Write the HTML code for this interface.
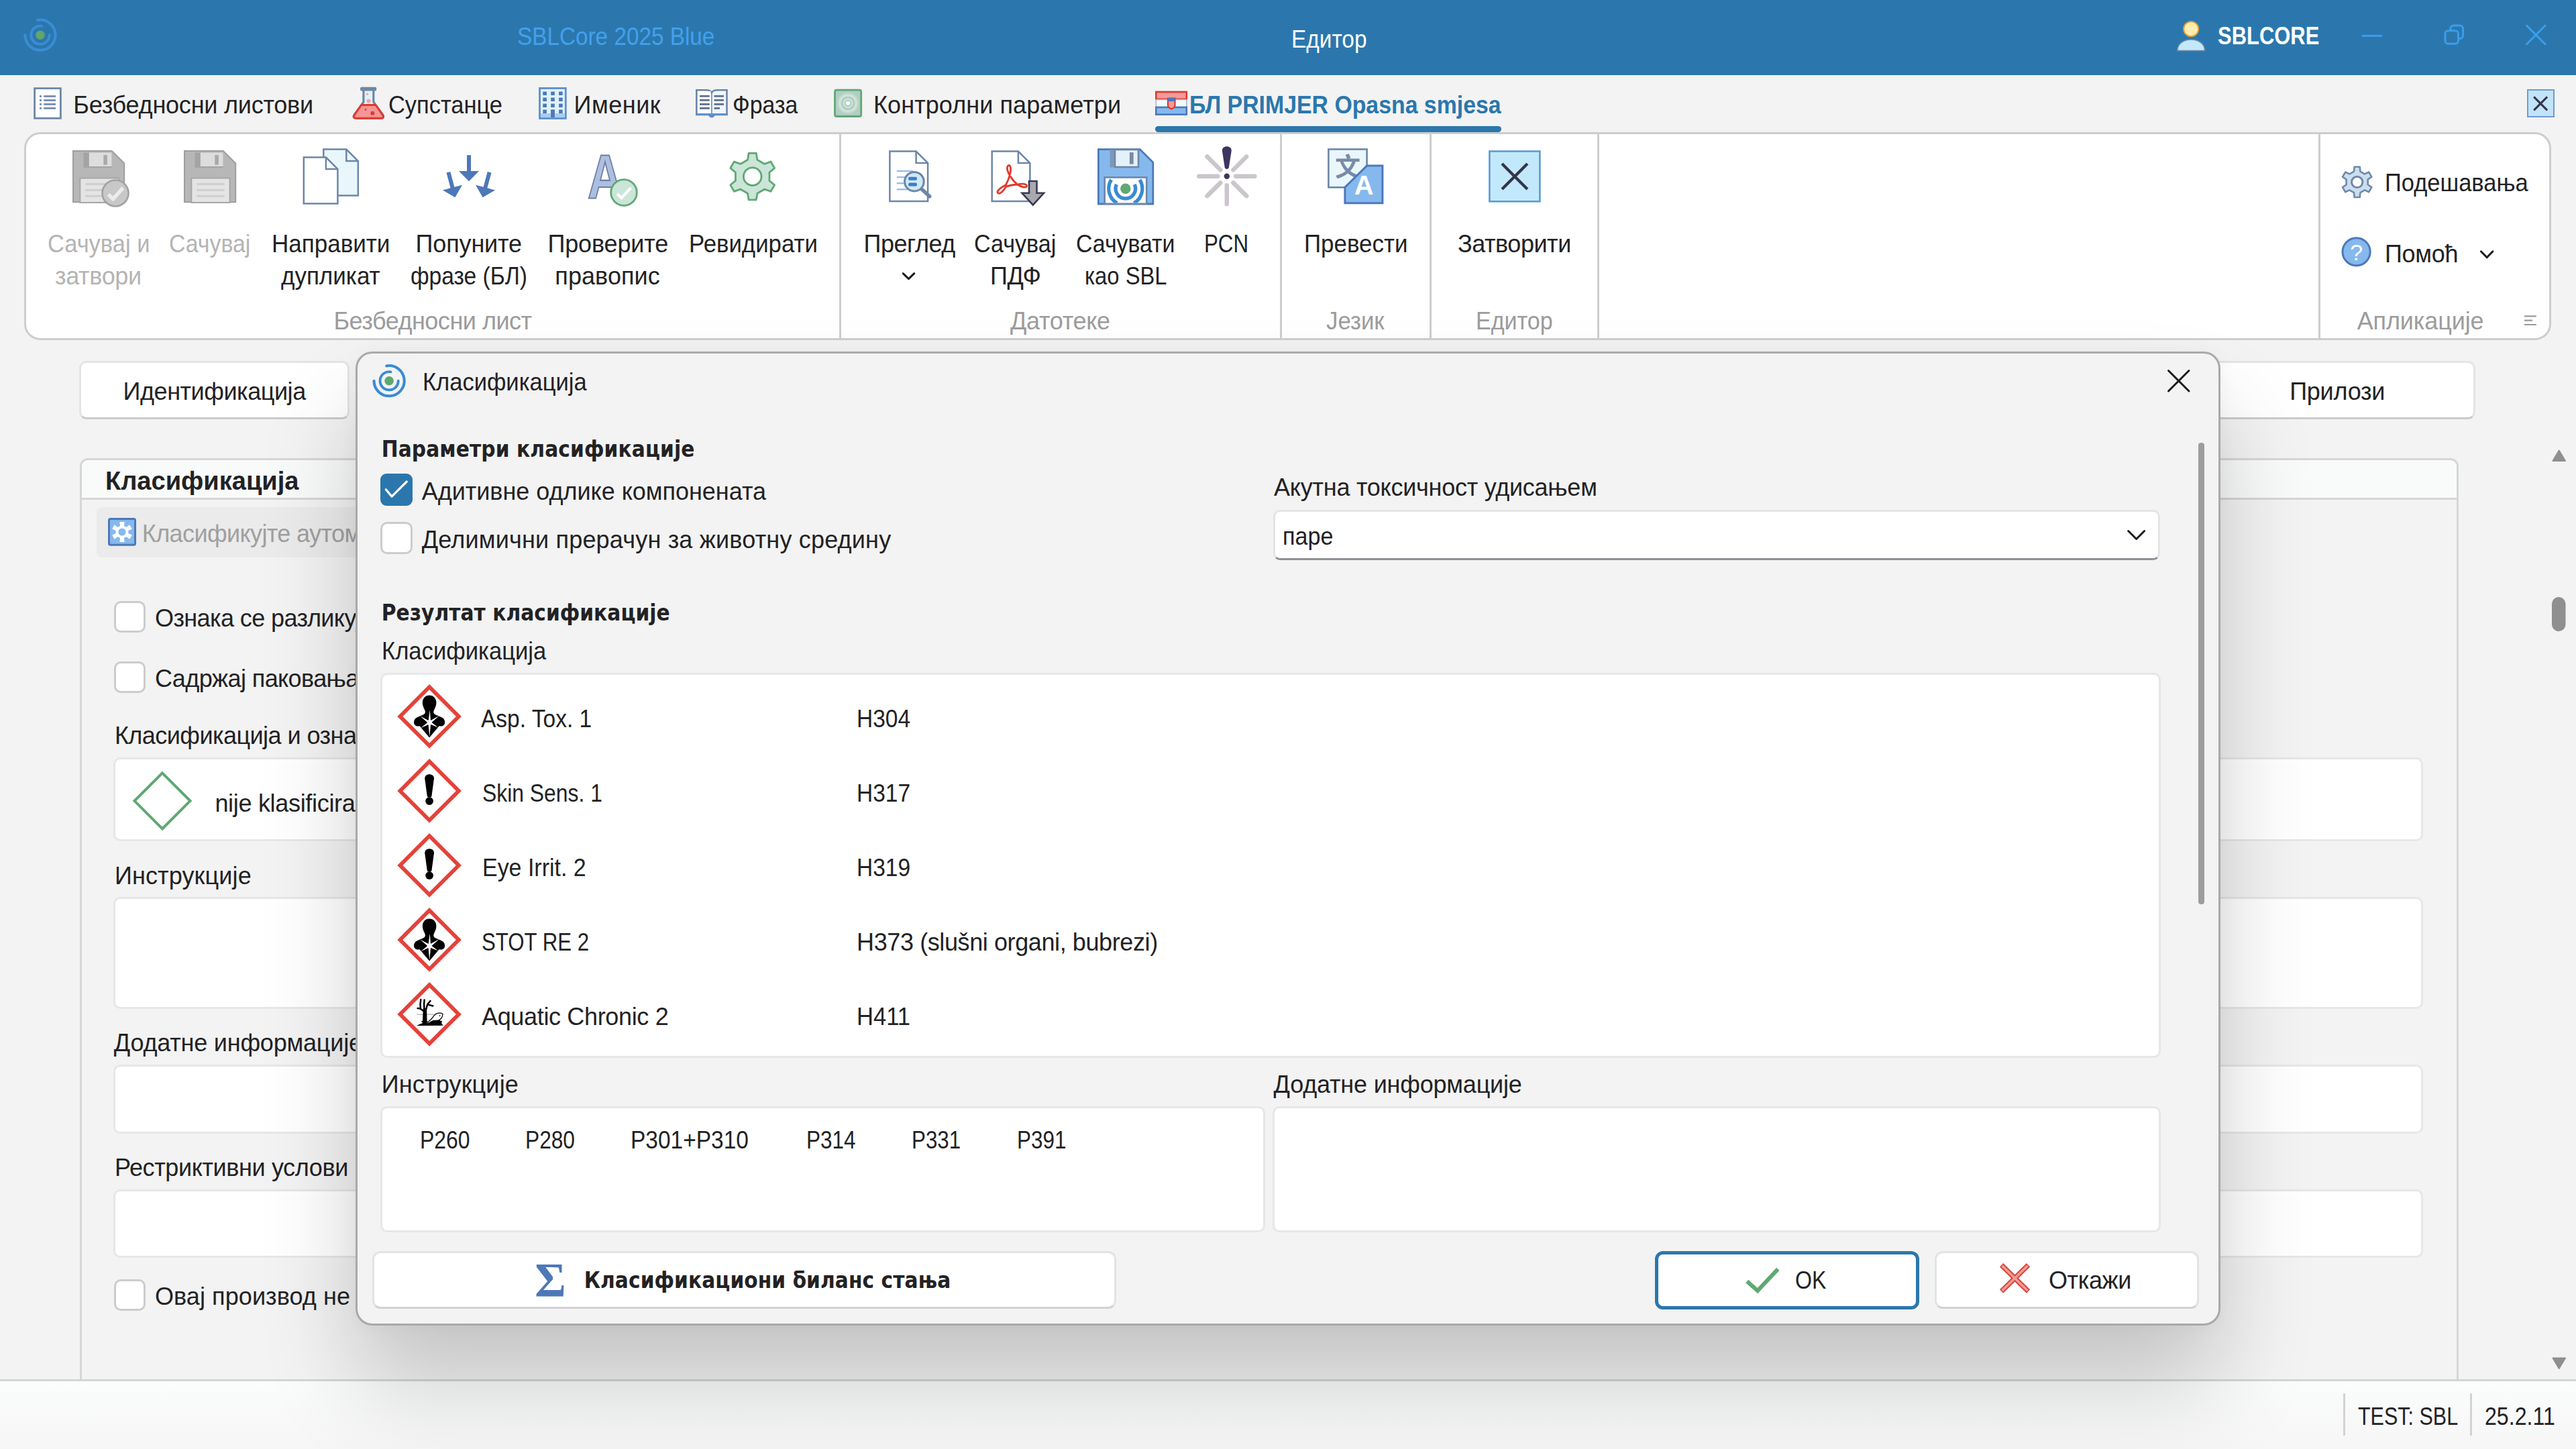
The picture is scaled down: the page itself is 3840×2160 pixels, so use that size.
<!DOCTYPE html>
<html lang="sr"><head><meta charset="utf-8"><title>SBLCore 2025 Blue</title>
<style>
*{box-sizing:border-box;margin:0;padding:0}
html,body{width:3840px;height:2160px;overflow:hidden;background:#f3f3f3}
body{font-family:"Liberation Sans",sans-serif;color:#222224}
#app{position:relative;width:3840px;height:2160px;overflow:hidden;background:#f3f3f3}
#app div,#app span,#app svg{position:absolute}
.t{white-space:pre;line-height:1;font-size:36px;transform-origin:0 0}
#titlebar{left:0;top:0;width:3840px;height:112px;background:#2b77ad}
#ribbon{left:36px;top:197px;width:3767px;height:310px;background:#fff;border:3px solid #cdcdcd;border-radius:24px}
.vsep{width:3px;top:200px;height:304px;background:#cdcdcd}
#tabul{left:1722px;top:188px;width:516px;height:9px;border-radius:4.500px;background:#2b77ad}
#tabx{left:3767px;top:133px;width:41px;height:42px;background:#c2e4f8;border:2px solid #6f9bd1}
.navbtn{background:#fff;border:3px solid #e4e4e4;border-bottom-color:#cbcbcb;border-radius:11px}
#panel{left:119px;top:683px;width:3546px;height:1500px;border:3px solid #d6d6d6;border-radius:12px 12px 0 0;background:#f3f3f3}
#panelhd{left:122px;top:686px;width:3540px;height:56px;background:#f9fafa;border-radius:9px 9px 0 0}
#panelsep{left:122px;top:742px;width:3540px;height:3px;background:#d6d6d6}
#autobtn{left:144px;top:756px;width:800px;height:75px;background:#ebebeb;border-radius:8px}
.cb{width:47px;height:47px;background:#fff;border:3px solid #cccccc;border-radius:10px}
.field{background:#fff;border:3px solid #e7e7e7;border-radius:10px}
#status{left:0;top:2056px;width:3840px;height:104px;background:linear-gradient(#fbfcfc,#f6f6f6);border-top:3px solid #d4d4d4}
.ssep{width:3px;top:2077px;height:63px;background:#d2d2d2}
#dlg{left:530px;top:524px;width:2780px;height:1452px;background:#f3f3f3;border:3px solid #a9a9a9;border-radius:25px;box-shadow:0 90px 140px rgba(0,0,0,.19),0 2px 30px rgba(0,0,0,.04)}
#dscroll{left:3277px;top:660px;width:9px;height:688px;border-radius:4px;background:#9d9d9f}
#combo{left:1898px;top:760px;width:1322px;height:75px;background:#fff;border:3px solid #e4e4e4;border-bottom:3px solid #8d9096;border-radius:10px}
#cbchk{left:567px;top:706px;width:48px;height:48px;background:#2b77ad;border-radius:9px}
.btn{background:#fff;border:3px solid #e3e3e3;border-bottom-color:#d2d2d2;border-radius:12px}
#okbtn{left:2467px;top:1864.500px;width:394px;height:87px;background:#fff;border:5px solid #2b77ad;border-radius:12px}

</style></head><body>
<div id="app">
<div id="titlebar"></div>
<div id="tabul"></div>
<div id="tabx"></div>
<div id="ribbon"></div>
<div class="vsep" style="left:1251px"></div>
<div class="vsep" style="left:1908px"></div>
<div class="vsep" style="left:2131px"></div>
<div class="vsep" style="left:2381px"></div>
<div class="vsep" style="left:3456px"></div>
<div class="navbtn" style="left:118px;top:538px;width:403px;height:87px"></div>
<div class="navbtn" style="left:3000px;top:538px;width:690px;height:87px"></div>
<div id="panel"></div>
<div id="panelhd"></div>
<div id="panelsep"></div>
<div id="autobtn"></div>
<div class="cb" style="left:169.500px;top:895.500px"></div>
<div class="cb" style="left:169.500px;top:985.500px"></div>
<div class="cb" style="left:169.500px;top:1907px"></div>
<div class="field" style="left:169px;top:1129px;width:3443px;height:125px"></div>
<div class="field" style="left:169px;top:1337px;width:3443px;height:167px"></div>
<div class="field" style="left:169px;top:1587px;width:3443px;height:103px"></div>
<div class="field" style="left:169px;top:1773px;width:3443px;height:102px"></div>
<div id="status"></div>
<div class="ssep" style="left:3493px"></div>
<div class="ssep" style="left:3682px"></div>
<svg width="3840" height="2160" viewBox="0 0 3840 2160" style="left:0;top:0"><circle cx="60" cy="52.2" r="6.80" fill="#5ea56f"/><path d="M73.60 52.20A13.6 13.6 0 1 1 62.36 38.81" fill="none" stroke="#3b8cd6" stroke-width="3.9" stroke-linecap="round"/><path d="M56.08 29.94A22.6 22.6 0 1 1 37.40 52.20" fill="none" stroke="#3b8cd6" stroke-width="4.1" stroke-linecap="round"/><path d="M3245.8 75.5C3245.8 53.5 3286.6 53.5 3286.6 75.5Z" fill="#c2e9fb" stroke="#7189a8" stroke-width="1.6"/><circle cx="3266.2" cy="43.3" r="11" fill="#fdeeb0" stroke="#e8a43a" stroke-width="2"/><path d="M3520.8 53.4H3551" stroke="#3c9dec" stroke-width="3"/><path d="M3653 45V42.5A4.5 4.5 0 0 1 3657.5 38H3667A4.5 4.5 0 0 1 3671.5 42.5V53A4.5 4.5 0 0 1 3667 57.500H3665" fill="none" stroke="#3c9dec" stroke-width="3"/><rect x="3645" y="45.8" width="19.5" height="19.5" rx="4.5" fill="none" stroke="#3c9dec" stroke-width="3"/><path d="M3765.5 37.300L3795 66.800M3795 37.300L3765.500 66.800" stroke="#3c9dec" stroke-width="3"/><rect x="51.6" y="131.700" width="38.800" height="44.600" fill="#fff" stroke="#6d86a8" stroke-width="2.8"/><rect x="59" y="142.2" width="3" height="2.6" fill="#6d86a8"/><rect x="65.200" y="142.2" width="17.800" height="2.6" fill="#6d86a8"/><rect x="59" y="148.2" width="3" height="2.6" fill="#6d86a8"/><rect x="65.200" y="148.2" width="17.800" height="2.6" fill="#6d86a8"/><rect x="59" y="154.1" width="3" height="2.6" fill="#6d86a8"/><rect x="65.200" y="154.1" width="17.800" height="2.6" fill="#6d86a8"/><rect x="59" y="160.1" width="3" height="2.6" fill="#6d86a8"/><rect x="65.200" y="160.1" width="17.800" height="2.6" fill="#6d86a8"/><path d="M541.900 135V152L527.500 172.300Q526.300 175.800 530 176.200H568.700Q572.400 175.800 571.200 172.300L556.800 152V135" fill="#e4f1f8" stroke="#6d86a8" stroke-width="3.200" stroke-linejoin="round"/><path d="M538.700 156.500H560L571.200 172.300Q572.400 175.800 568.700 176.200H530Q526.300 175.800 527.500 172.300Z" fill="#f59595" stroke="#e0392d" stroke-width="3" stroke-linejoin="round"/><rect x="537" y="129.800" width="24.200" height="5.600" rx="2" fill="#6d86a8"/><circle cx="549.500" cy="150.500" r="3.100" fill="#f7a3a3"/><circle cx="547.500" cy="140.300" r="1.700" fill="#f7a3a3"/><circle cx="555.300" cy="168.800" r="3" fill="#e0392d"/><circle cx="545" cy="163.500" r="1.400" fill="#e0392d"/><rect x="804.500" y="131.500" width="38.800" height="45" fill="#dff1fb" stroke="#5b8fd0" stroke-width="2.800"/><rect x="806" y="169" width="35.800" height="6" fill="#a9cdee"/><rect x="809.3" y="136.6" width="5.600" height="5.400" fill="#4d78b8"/><rect x="821.2" y="136.6" width="5.600" height="5.400" fill="#4d78b8"/><rect x="833.1" y="136.6" width="5.600" height="5.400" fill="#4d78b8"/><rect x="809.3" y="145.6" width="5.600" height="5.400" fill="#4d78b8"/><rect x="821.2" y="145.6" width="5.600" height="5.400" fill="#4d78b8"/><rect x="833.1" y="145.6" width="5.600" height="5.400" fill="#4d78b8"/><rect x="809.3" y="154.6" width="5.600" height="5.400" fill="#4d78b8"/><rect x="821.2" y="154.6" width="5.600" height="5.400" fill="#4d78b8"/><rect x="833.1" y="154.6" width="5.600" height="5.400" fill="#4d78b8"/><rect x="809.3" y="163.6" width="5.600" height="5.400" fill="#4d78b8"/><rect x="821.2" y="163.6" width="5.600" height="5.400" fill="#4d78b8"/><rect x="833.1" y="163.6" width="5.600" height="5.400" fill="#4d78b8"/><rect x="821.200" y="163.600" width="5.600" height="11.500" fill="#4d78b8"/><path d="M1038.300 134.200H1052.500Q1059 134.200 1060.900 138.200Q1062.800 134.200 1069.300 134.200H1083.500V170.500H1038.300Z" fill="#eef7fc" stroke="#6d86a8" stroke-width="2.600"/><path d="M1037 169.300H1084.800V172.300H1066Q1063.500 175.500 1060.900 175.500Q1058.300 175.500 1055.800 172.300H1037Z" fill="#5b8fd0"/><rect x="1040" y="136" width="19.500" height="32.500" fill="#fff"/><path d="M1060.900 138.200V169" stroke="#6d86a8" stroke-width="1.500"/><rect x="1043" y="141.9" width="14.800" height="2.800" fill="#5f6f8c"/><rect x="1064.500" y="141.9" width="14.5" height="2.800" fill="#5f6f8c"/><rect x="1043" y="147.9" width="14.800" height="2.800" fill="#5f6f8c"/><rect x="1064.500" y="147.9" width="14.5" height="2.800" fill="#5f6f8c"/><rect x="1043" y="154.0" width="14.800" height="2.800" fill="#5f6f8c"/><rect x="1064.500" y="154.0" width="14.5" height="2.800" fill="#5f6f8c"/><rect x="1043" y="160.0" width="14.800" height="2.800" fill="#5f6f8c"/><rect x="1064.500" y="160.0" width="8.5" height="2.800" fill="#5f6f8c"/><defs><radialGradient id="tg" cx="50%" cy="50%" r="60%"><stop offset="0" stop-color="#fff"/><stop offset="0.12" stop-color="#fff"/><stop offset="0.16" stop-color="#9fc0b8"/><stop offset="0.26" stop-color="#d9edd8"/><stop offset="0.36" stop-color="#a9c5c2"/><stop offset="0.5" stop-color="#d3e8da"/><stop offset="0.7" stop-color="#b3cfc4"/><stop offset="1" stop-color="#b0cdc0"/></radialGradient></defs><rect x="1244.500" y="134.200" width="39.200" height="39.300" rx="2.500" fill="url(#tg)" stroke="#5fa873" stroke-width="2.800"/><rect x="1723.300" y="137" width="45.500" height="10.800" fill="#f59a9a" stroke="#e0392d" stroke-width="2.600"/><rect x="1723.300" y="148.500" width="45.500" height="11.500" fill="#f4fafd" stroke="#a9b9cf" stroke-width="1.600"/><rect x="1723.300" y="159.900" width="45.500" height="10.800" fill="#85b9ee" stroke="#4d78b8" stroke-width="2.600"/><path d="M1741 146.500H1751.500V157Q1751.500 160.500 1746.250 162.500Q1741 160.500 1741 157Z" fill="#f59a9a" stroke="#e0392d" stroke-width="2.200"/><rect x="1741" y="146" width="10.500" height="5" fill="#4d78b8"/><path d="M3777.200 144.400L3797.100 164.400M3797.100 144.400L3777.200 164.400" stroke="#34344a" stroke-width="3"/><path d="M109 225H166.7L185.2 243.5V301.2H109Z" fill="#b7b7b7" stroke="#9e9e9e" stroke-width="2"/><rect x="124.5" y="227.5" width="42" height="22.5" fill="#a4a4a4"/><rect x="132.8" y="227.5" width="33.7" height="20.5" fill="#dddddd"/><rect x="154.3" y="231.1" width="5.6" height="14.6" fill="#a9a9a9"/><rect x="119.3" y="265.5" width="57.3" height="36.5" fill="#e4e4e4" stroke="#a6a6a6" stroke-width="2"/><rect x="127.3" y="272.9" width="41.3" height="3" fill="#cfcfcf"/><rect x="127.3" y="281.8" width="41.3" height="3" fill="#cfcfcf"/><rect x="127.3" y="290.8" width="41.3" height="3" fill="#cfcfcf"/><circle cx="172" cy="288" r="19.5" fill="#c8c8c8" stroke="#a2a2a2" stroke-width="2.6"/><path d="M161.5 289.8L168.6 296.6L183.3 280.2" fill="none" stroke="#ececec" stroke-width="5.5"/><path d="M275 225H332.7L351.2 243.5V301.2H275Z" fill="#b7b7b7" stroke="#9e9e9e" stroke-width="2"/><rect x="290.5" y="227.5" width="42" height="22.5" fill="#a4a4a4"/><rect x="298.8" y="227.5" width="33.7" height="20.5" fill="#dddddd"/><rect x="320.3" y="231.1" width="5.6" height="14.6" fill="#a9a9a9"/><rect x="285.3" y="265.5" width="57.3" height="36.5" fill="#e4e4e4" stroke="#a6a6a6" stroke-width="2"/><rect x="293.3" y="272.9" width="41.3" height="3" fill="#cfcfcf"/><rect x="293.3" y="281.8" width="41.3" height="3" fill="#cfcfcf"/><rect x="293.3" y="290.8" width="41.3" height="3" fill="#cfcfcf"/><path d="M482.3 222.5H516.3L533.8 240.0V291.5H482.3Z" fill="#e9f7fc" stroke="#6d86a8" stroke-width="2.5" stroke-linejoin="miter"/><path d="M516.3 222.5V240.0H533.8" fill="none" stroke="#6d86a8" stroke-width="2.5"/><path d="M452.8 234.6H485.90000000000003L503.40000000000003 252.1V303.6H452.8Z" fill="#fff" stroke="#6d86a8" stroke-width="2.5" stroke-linejoin="miter"/><path d="M485.90000000000003 234.6V252.1H503.40000000000003" fill="none" stroke="#6d86a8" stroke-width="2.5"/><path d="M696.00 231.30L696.00 255.00L684.00 255.00L699.00 270.20L714.00 255.00L702.00 255.00L702.00 231.30Z" fill="#4d78b8"/><path d="M665.50 257.47L671.58 280.29L659.99 283.38L678.40 294.20L688.98 275.65L677.38 278.74L671.30 255.93Z" fill="#4d78b8"/><path d="M726.70 255.93L720.62 278.74L709.02 275.65L719.60 294.20L738.01 283.38L726.42 280.29L732.50 257.47Z" fill="#4d78b8"/><text x="902" y="295" font-family="Liberation Sans, sans-serif" font-size="92" font-weight="700" text-anchor="middle" textLength="52" lengthAdjust="spacingAndGlyphs" fill="#adbfe0" stroke="#6d7fa3" stroke-width="2.200">A</text><circle cx="930" cy="287" r="19.300" fill="#cbe5d9" stroke="#5fa873" stroke-width="2.800"/><path d="M920 289L926.500 295L940.500 280" fill="none" stroke="#fff" stroke-width="4.200"/><path d="M1114.45 238.23L1116.15 228.44L1127.25 228.44L1128.95 238.23L1139.70 244.43L1149.03 241.01L1154.58 250.63L1146.95 257.00L1146.95 269.40L1154.58 275.77L1149.03 285.39L1139.70 281.97L1128.95 288.17L1127.25 297.96L1116.15 297.96L1114.45 288.17L1103.70 281.97L1094.37 285.39L1088.82 275.77L1096.45 269.40L1096.45 257.00L1088.82 250.63L1094.37 241.01L1103.70 244.43Z" fill="#cbe5d9" stroke="#5fa873" stroke-width="2.800" stroke-linejoin="round"/><circle cx="1121.700" cy="263.200" r="13.300" fill="#fff" stroke="#5fa873" stroke-width="2.800"/><path d="M1326.4 225.6H1365.6000000000001L1383.1000000000001 243.1V300.0H1326.4Z" fill="#fff" stroke="#6d86a8" stroke-width="2.5" stroke-linejoin="miter"/><path d="M1365.6000000000001 225.6V243.1H1383.1000000000001" fill="none" stroke="#6d86a8" stroke-width="2.5"/><rect x="1336.800" y="253.8" width="24" height="2.400" fill="#9bbde3"/><rect x="1336.800" y="262.90000000000003" width="24" height="2.400" fill="#9bbde3"/><rect x="1336.800" y="272.0" width="24" height="2.400" fill="#9bbde3"/><rect x="1336.800" y="281.1" width="24" height="2.400" fill="#9bbde3"/><path d="M1373.500 281.500L1385.700 292.800" stroke="#6d86a8" stroke-width="5.500" stroke-linecap="round"/><circle cx="1362.900" cy="270.700" r="14.300" fill="#cfe9f7" stroke="#6d86a8" stroke-width="3"/><rect x="1354" y="263.800" width="13" height="5" rx="2" fill="#3b7fc4"/><rect x="1354" y="272.500" width="13" height="5" rx="2" fill="#3b7fc4"/><path d="M1478.7 225.6H1517.9L1535.4 243.1V300.0H1478.7Z" fill="#fff" stroke="#6d86a8" stroke-width="2.5" stroke-linejoin="miter"/><path d="M1517.9 225.6V243.1H1535.4" fill="none" stroke="#6d86a8" stroke-width="2.5"/><path d="M1487.500 287.500C1485 285 1492 279.500 1499.500 275.500C1504.500 266 1508 254 1506 248.500C1504.500 244.500 1501 246.500 1501.500 251.500C1502.300 259 1509 268.500 1516.500 275C1522 273.500 1530 273.500 1530.500 277C1531 280.500 1523 279.500 1516.500 275C1510 275.500 1504 276.500 1499.500 278.500C1495 286 1490 290 1487.500 287.500Z" fill="none" stroke="#e0392d" stroke-width="2.800" stroke-linejoin="round"/><path d="M1534 270H1545.500V287.800H1556L1539.800 305.500L1523.500 287.800H1534Z" fill="#a9a9ad" stroke="#3a3a52" stroke-width="2.600" stroke-linejoin="miter"/><path d="M1637.4 222.6H1699.3000000000002L1718.8000000000002 242.1V304.0H1637.4Z" fill="#85b9ee" stroke="#4d78b8" stroke-width="2.800"/><rect x="1654.500" y="223" width="8" height="26.500" fill="#7f97b8"/><rect x="1662" y="223" width="35" height="26" fill="#e4f1f8" stroke="#6d86a8" stroke-width="2.600"/><rect x="1683.900" y="227.100" width="5.800" height="17.500" fill="#7a8aa8"/><clipPath id="lblc"><rect x="1648" y="265.500" width="60" height="37"/></clipPath><rect x="1646.700" y="264.400" width="62.500" height="39.400" fill="#fff" stroke="#6d86a8" stroke-width="2.600"/><g clip-path="url(#lblc)"><circle cx="1677.800" cy="281.200" r="7.700" fill="#5fa873"/><path d="M1691.21 274.95A14.8 14.8 0 1 1 1664.39 274.95" fill="none" stroke="#3a8bd4" stroke-width="5.4" stroke-linecap="butt"/><path d="M1699.00 267.95A25 25 0 0 1 1690.30 302.85" fill="none" stroke="#3a8bd4" stroke-width="5.2" stroke-linecap="butt"/><path d="M1665.30 302.85A25 25 0 0 1 1656.60 267.95" fill="none" stroke="#3a8bd4" stroke-width="5.2" stroke-linecap="butt"/></g><path d="M1838.35 253.25L1858.14 233.46" stroke="#cbc5cc" stroke-width="6.500" stroke-linecap="round"/><path d="M1842.30 262.80L1870.30 262.80" stroke="#cbc5cc" stroke-width="6.500" stroke-linecap="round"/><path d="M1838.35 272.35L1858.14 292.14" stroke="#cbc5cc" stroke-width="6.500" stroke-linecap="round"/><path d="M1828.80 276.30L1828.80 304.30" stroke="#cbc5cc" stroke-width="6.500" stroke-linecap="round"/><path d="M1819.25 272.35L1799.46 292.14" stroke="#cbc5cc" stroke-width="6.500" stroke-linecap="round"/><path d="M1815.30 262.80L1787.30 262.80" stroke="#cbc5cc" stroke-width="6.500" stroke-linecap="round"/><path d="M1819.25 253.25L1799.46 233.46" stroke="#cbc5cc" stroke-width="6.500" stroke-linecap="round"/><path d="M1821.8 224.500C1821.8 216 1835.8 216 1835.8 224.500L1831.8 250C1831.3999999999999 252.500 1826.2 252.500 1825.8 250Z" fill="#3d3560"/><circle cx="1828.8" cy="262.8" r="4.200" fill="#3d3560"/><rect x="1980.400" y="222.500" width="57.200" height="56.800" fill="#e9f7fc" stroke="#6d86a8" stroke-width="2.600"/><text x="2009" y="262" font-family="Noto Sans CJK SC, sans-serif" font-size="38" font-weight="700" text-anchor="middle" fill="#7a8aa8">文</text><path d="M2037.500 247.100H2060.900V302.800H2004.900V279.200Z" fill="#85b9ee" stroke="#4d78b8" stroke-width="3"/><text x="2033.200" y="289.800" font-family="Liberation Sans, sans-serif" font-size="40" font-weight="700" text-anchor="middle" fill="#fff">A</text><rect x="2220.400" y="225.500" width="75" height="74.800" fill="#c2e9fb" stroke="#5b9bd5" stroke-width="2.600"/><path d="M2239 244.100L2276.900 282M2276.900 244.100L2239 282" stroke="#34344a" stroke-width="4.300"/><path d="M1346.25 407.6L1354.5 415.6L1362.75 407.6" fill="none" stroke="#1c1c1e" stroke-width="3" stroke-linecap="round" stroke-linejoin="round"/><path d="M3509.01 255.58L3509.62 248.77L3517.78 248.77L3518.39 255.58L3525.06 259.43L3531.26 256.55L3535.34 263.62L3529.74 267.55L3529.74 275.25L3535.34 279.18L3531.26 286.25L3525.06 283.37L3518.39 287.22L3517.78 294.03L3509.62 294.03L3509.01 287.22L3502.34 283.37L3496.14 286.25L3492.06 279.18L3497.66 275.25L3497.66 267.55L3492.06 263.62L3496.14 256.55L3502.34 259.43Z" fill="#c9dff0" stroke="#7189a8" stroke-width="2.600" stroke-linejoin="round"/><circle cx="3513.700" cy="271.400" r="8.200" fill="#fff" stroke="#7189a8" stroke-width="3"/><circle cx="3512.600" cy="375.300" r="20.600" fill="#85b9ee" stroke="#4d78b8" stroke-width="3"/><text x="3512.800" y="387.500" font-family="Liberation Sans, sans-serif" font-size="34" text-anchor="middle" fill="#fff">?</text><path d="M3698.45 374.8L3707.2 383.8L3715.95 374.8" fill="none" stroke="#1c1c1e" stroke-width="3" stroke-linecap="round" stroke-linejoin="round"/><path d="M3763 471.400H3780.800M3763 477.700H3775M3763 484H3780.800" stroke="#9a9a9a" stroke-width="2.200"/><rect x="162.500" y="773.600" width="39" height="38.700" rx="2" fill="#85b9ee" stroke="#4d78b8" stroke-width="3"/><path d="M179.06 783.96L178.38 777.93L185.62 777.93L184.94 783.96L188.36 785.94L193.24 782.33L196.86 788.60L191.29 791.02L191.29 794.98L196.86 797.40L193.24 803.67L188.36 800.06L184.94 802.04L185.62 808.07L178.38 808.07L179.06 802.04L175.64 800.06L170.76 803.67L167.14 797.40L172.71 794.98L172.71 791.02L167.14 788.60L170.76 782.33L175.64 785.94Z" fill="#fff"/><circle cx="182" cy="793" r="5.600" fill="#85b9ee"/><path d="M242 1152.300L283.500 1193.800L242 1235.300L200.500 1193.800Z" fill="#fff" stroke="#5fa873" stroke-width="4"/><path d="M3805.500 687L3814.700 671.500L3824 687Z" fill="#8f8f8f" stroke="#8f8f8f" stroke-width="2" stroke-linejoin="round"/><path d="M3805.500 2024.500L3814.700 2040L3824 2024.500Z" fill="#8f8f8f" stroke="#8f8f8f" stroke-width="2" stroke-linejoin="round"/><rect x="3804" y="890" width="20.500" height="51" rx="10.200" fill="#8f8f8f"/></svg>
<span class="t" style="left:770.5px;top:36.7px;transform:scaleX(0.9251);color:#42a1ec;">SBLCore 2025 Blue</span>
<span class="t" style="left:1924.6px;top:41.0px;transform:scaleX(0.9277);color:#ffffff;">Едитор</span>
<span class="t" style="left:3306.2px;top:36.2px;transform:scaleX(0.8596);color:#ffffff;font-weight:700;">SBLCORE</span>
<span class="t" style="left:109.3px;top:139.0px;letter-spacing:-0.22px;">Безбедносни листови</span>
<span class="t" style="left:579.0px;top:139.0px;transform:scaleX(0.9566);">Супстанце</span>
<span class="t" style="left:855.6px;top:139.0px;letter-spacing:0.51px;">Именик</span>
<span class="t" style="left:1091.7px;top:139.0px;transform:scaleX(0.9397);">Фраза</span>
<span class="t" style="left:1302.0px;top:139.0px;letter-spacing:0.09px;">Контролни параметри</span>
<span class="t" style="left:1773.4px;top:139.0px;transform:scaleX(0.9397);color:#2b77ad;font-weight:700;">БЛ PRIMJER Opasna smjesa</span>
<span class="t" style="left:70.6px;top:346.1px;transform:scaleX(0.9570);color:#b4b4b4;">Сачувај и</span>
<span class="t" style="left:82.0px;top:393.9px;letter-spacing:-0.32px;color:#b4b4b4;">затвори</span>
<span class="t" style="left:252.4px;top:346.1px;transform:scaleX(0.9393);color:#b4b4b4;">Сачувај</span>
<span class="t" style="left:405.0px;top:346.1px;transform:scaleX(0.9725);">Направити</span>
<span class="t" style="left:418.9px;top:393.9px;transform:scaleX(0.9719);">дупликат</span>
<span class="t" style="left:619.6px;top:346.1px;letter-spacing:-0.15px;">Попуните</span>
<span class="t" style="left:612.0px;top:393.9px;transform:scaleX(0.9324);">фразе (БЛ)</span>
<span class="t" style="left:816.4px;top:346.1px;letter-spacing:-0.12px;">Проверите</span>
<span class="t" style="left:827.3px;top:393.9px;letter-spacing:0.09px;">правопис</span>
<span class="t" style="left:1026.6px;top:346.1px;transform:scaleX(0.9655);">Ревидирати</span>
<span class="t" style="left:497.4px;top:460.5px;letter-spacing:-0.48px;color:#9c9c9c;">Безбедносни лист</span>
<span class="t" style="left:1287.5px;top:346.1px;letter-spacing:-0.46px;">Преглед</span>
<span class="t" style="left:1452.4px;top:346.1px;transform:scaleX(0.9470);">Сачувај</span>
<span class="t" style="left:1476.0px;top:393.9px;letter-spacing:-0.42px;">ПДФ</span>
<span class="t" style="left:1603.5px;top:346.1px;transform:scaleX(0.9399);">Сачувати</span>
<span class="t" style="left:1617.0px;top:393.9px;transform:scaleX(0.9106);">као SBL</span>
<span class="t" style="left:1795.0px;top:346.1px;transform:scaleX(0.8682);">PCN</span>
<span class="t" style="left:1506.0px;top:460.5px;letter-spacing:-0.30px;color:#9c9c9c;">Датотеке</span>
<span class="t" style="left:1944.0px;top:346.1px;transform:scaleX(0.9694);">Превести</span>
<span class="t" style="left:1977.0px;top:460.5px;transform:scaleX(0.9664);color:#9c9c9c;">Језик</span>
<span class="t" style="left:2173.0px;top:346.1px;letter-spacing:-0.46px;">Затворити</span>
<span class="t" style="left:2199.8px;top:460.5px;transform:scaleX(0.9459);color:#9c9c9c;">Едитор</span>
<span class="t" style="left:3555.0px;top:255.4px;transform:scaleX(0.9576);">Подешавања</span>
<span class="t" style="left:3555.0px;top:360.7px;letter-spacing:-0.31px;">Помоћ</span>
<span class="t" style="left:3513.7px;top:460.5px;letter-spacing:-0.12px;color:#9c9c9c;">Апликације</span>
<span class="t" style="left:183.6px;top:565.9px;letter-spacing:-0.45px;">Идентификација</span>
<span class="t" style="left:3413.2px;top:565.9px;letter-spacing:-0.24px;">Прилози</span>
<span class="t" style="left:157.0px;top:697.9px;font-size:38px;letter-spacing:0.02px;font-weight:700;">Класификација</span>
<span class="t" style="left:211.8px;top:777.5px;letter-spacing:-0.60px;color:#a0a0a0;">Класификујте аутоматски</span>
<span class="t" style="left:231.0px;top:903.7px;letter-spacing:-0.60px;">Ознака се разликује од класификације</span>
<span class="t" style="left:231.0px;top:993.7px;letter-spacing:-0.60px;">Садржај паковања не прелази 125 ml</span>
<span class="t" style="left:170.9px;top:1078.7px;letter-spacing:-0.54px;">Класификација и означавање</span>
<span class="t" style="left:320.4px;top:1179.8px;letter-spacing:-0.31px;">nije klasificirano</span>
<span class="t" style="left:170.9px;top:1287.6px;letter-spacing:0.14px;">Инструкције</span>
<span class="t" style="left:169.8px;top:1537.0px;letter-spacing:-0.20px;">Додатне информације</span>
<span class="t" style="left:170.9px;top:1722.9px;letter-spacing:-0.38px;">Рестриктивни услови</span>
<span class="t" style="left:230.9px;top:1914.7px;letter-spacing:0.09px;">Овај производ не</span>
<span class="t" style="left:3514.5px;top:2093.9px;transform:scaleX(0.8469);">TEST: SBL</span>
<span class="t" style="left:3704.0px;top:2093.9px;transform:scaleX(0.8923);">25.2.11</span>
<div id="dlg"></div>
<div id="dscroll"></div>
<div id="cbchk"></div>
<div class="cb" style="left:567px;top:778px;width:48px;height:48px"></div>
<div id="combo"></div>
<div class="field" style="left:567px;top:1003px;width:2654px;height:574px"></div>
<div class="field" style="left:567px;top:1649px;width:1319px;height:188px"></div>
<div class="field" style="left:1897px;top:1649px;width:1324px;height:188px"></div>
<div class="btn" style="left:555px;top:1865px;width:1109px;height:86px"></div>
<div id="okbtn"></div>
<div class="btn" style="left:2884px;top:1865px;width:394px;height:86px"></div>
<svg width="3840" height="2160" viewBox="0 0 3840 2160" style="left:0;top:0"><circle cx="580.1" cy="567.7" r="6.80" fill="#5fa873"/><path d="M593.70 567.70A13.6 13.6 0 1 1 582.46 554.31" fill="none" stroke="#3a8bd4" stroke-width="3.9" stroke-linecap="round"/><path d="M576.18 545.44A22.6 22.6 0 1 1 557.50 567.70" fill="none" stroke="#3a8bd4" stroke-width="4.1" stroke-linecap="round"/><path d="M3232.500 552.500L3263 583M3263 552.500L3232.500 583" stroke="#1c1c1e" stroke-width="3" stroke-linecap="round"/><path d="M575.300 729.800L584.100 740.100L606.200 718" fill="none" stroke="#fff" stroke-width="3.200" stroke-linecap="round" stroke-linejoin="round"/><path d="M3172.6 791.5L3184.6 803.5L3196.6 791.5" fill="none" stroke="#1c1c1e" stroke-width="3" stroke-linecap="round" stroke-linejoin="round"/><path d="M640.1 1024.1000000000001L683.9 1067.9L640.1 1111.7L596.3000000000001 1067.9Z" fill="#fff" stroke="#e4423a" stroke-width="5.7" stroke-linejoin="miter"/><g transform="translate(640.1 1067.9)"><path d="M0 -31.5C6 -31.5 10.3 -27 10.3 -20.5C10.3 -15.5 8 -12 6.5 -8.5C5.8 -6 6.5 -3.5 9.5 -2.5L17 0.8C21.5 2.5 23.3 5.5 23 9.5C22.6 13.5 19 15.5 14.5 14.3L0 31.5L-14.5 14.3C-19 15.5 -22.6 13.5 -23 9.5C-23.3 5.5 -21.5 2.5 -17 0.8L-9.5 -2.5C-6.5 -3.5 -5.8 -6 -6.5 -8.5C-8 -12 -10.3 -15.5 -10.3 -20.5C-10.3 -27 -6 -31.5 0 -31.5Z" fill="#000"/><path d="M2.20 9.24L0.60 -9.50L-1.80 9.16Z" fill="#fff"/><path d="M1.35 10.84L14.50 -0.80L-0.95 7.56Z" fill="#fff"/><path d="M-0.79 10.94L13.20 16.60L1.19 7.46Z" fill="#fff"/><path d="M-1.80 9.20L0.20 30.50L2.20 9.20Z" fill="#fff"/><path d="M-0.86 7.50L-13.00 17.40L1.26 10.90Z" fill="#fff"/><path d="M1.32 7.55L-13.80 -0.30L-0.92 10.85Z" fill="#fff"/><circle cx="0.2" cy="9.2" r="3.600" fill="#fff"/></g><path d="M640.1 1135.1000000000001L683.9 1178.9L640.1 1222.7L596.3000000000001 1178.9Z" fill="#fff" stroke="#e4423a" stroke-width="5.7" stroke-linejoin="miter"/><g transform="translate(640.1 1178.9)"><path d="M-6.9 -18.5C-6.9 -26.6 6.9 -26.6 6.9 -18.5L3.3 8.2C3 10.4 -3 10.4 -3.3 8.2Z" fill="#000"/><circle cx="0" cy="15.2" r="5.9" fill="#000"/></g><path d="M640.1 1246.1000000000001L683.9 1289.9L640.1 1333.7L596.3000000000001 1289.9Z" fill="#fff" stroke="#e4423a" stroke-width="5.7" stroke-linejoin="miter"/><g transform="translate(640.1 1289.9)"><path d="M-6.9 -18.5C-6.9 -26.6 6.9 -26.6 6.9 -18.5L3.3 8.2C3 10.4 -3 10.4 -3.3 8.2Z" fill="#000"/><circle cx="0" cy="15.2" r="5.9" fill="#000"/></g><path d="M640.1 1357.1000000000001L683.9 1400.9L640.1 1444.7L596.3000000000001 1400.9Z" fill="#fff" stroke="#e4423a" stroke-width="5.7" stroke-linejoin="miter"/><g transform="translate(640.1 1400.9)"><path d="M0 -31.5C6 -31.5 10.3 -27 10.3 -20.5C10.3 -15.5 8 -12 6.5 -8.5C5.8 -6 6.5 -3.5 9.5 -2.5L17 0.8C21.5 2.5 23.3 5.5 23 9.5C22.6 13.5 19 15.5 14.5 14.3L0 31.5L-14.5 14.3C-19 15.5 -22.6 13.5 -23 9.5C-23.3 5.5 -21.5 2.5 -17 0.8L-9.5 -2.5C-6.5 -3.5 -5.8 -6 -6.5 -8.5C-8 -12 -10.3 -15.5 -10.3 -20.5C-10.3 -27 -6 -31.5 0 -31.5Z" fill="#000"/><path d="M2.20 9.24L0.60 -9.50L-1.80 9.16Z" fill="#fff"/><path d="M1.35 10.84L14.50 -0.80L-0.95 7.56Z" fill="#fff"/><path d="M-0.79 10.94L13.20 16.60L1.19 7.46Z" fill="#fff"/><path d="M-1.80 9.20L0.20 30.50L2.20 9.20Z" fill="#fff"/><path d="M-0.86 7.50L-13.00 17.40L1.26 10.90Z" fill="#fff"/><path d="M1.32 7.55L-13.80 -0.30L-0.92 10.85Z" fill="#fff"/><circle cx="0.2" cy="9.2" r="3.600" fill="#fff"/></g><path d="M640.1 1468.1000000000001L683.9 1511.9L640.1 1555.7L596.3000000000001 1511.9Z" fill="#fff" stroke="#e4423a" stroke-width="5.7" stroke-linejoin="miter"/><g transform="translate(640.1 1511.9)"><path d="M-19 0.2H19" stroke="#9a9a9a" stroke-width="1"/><path d="M-8 -4.500L-14 -8.500L-17.500 -8.800M-13.200 -8.300L-13.600 -15L-12.800 -21.800M-7.600 -7L-8 -15L-7.500 -21.500M-5 -7L-3 -14.500L1.400 -19.900M-3 -14.500L5.200 -12.400" fill="none" stroke="#000" stroke-width="2.500" stroke-linecap="round" stroke-linejoin="round"/><path d="M-10.200 11L-9.300 -9H-4L-3.500 11Z" fill="#000"/><path d="M-19.5 17L-10 13L-12.5 9.8L-2 11L14 7.5L17 10L19 9.5L18 13L20.5 16.8Z" fill="#000"/><path d="M-6.5 12.8C0 12 3.5 6.5 7 2C10.5 -2.2 16.5 -2.8 20 -0.5C19.5 4 17 8 13.5 9C9.5 10 6 9 3.5 10.5C0 13 -3 14.5 -6.5 12.8Z" fill="#fff" stroke="#000" stroke-width="1.2" stroke-linejoin="round"/><circle cx="15.5" cy="2.2" r="0.9" fill="#000"/></g><text x="820.500" y="1931.500" font-family="Liberation Serif, serif" font-size="71" font-weight="700" text-anchor="middle" fill="#4d78b8">Σ</text><path d="M2604.200 1910.100L2620 1924.100L2650.300 1891.900" fill="none" stroke="#5fa873" stroke-width="6"/><path d="M2983.500 1885.800L3023.500 1925M3023.500 1885.800L2983.500 1925" stroke="#d9453d" stroke-width="7.500"/><path d="M2984.500 1886.800L3022.500 1924M3022.500 1886.800L2984.500 1924" stroke="#f29a94" stroke-width="3.500"/></svg>
<span class="t" style="left:629.8px;top:552.4px;transform:scaleX(0.9586);">Класификација</span>
<span class="t" style="left:568.7px;top:652.8px;font-size:33px;letter-spacing:0.12px;font-weight:700;font-family:'DejaVu Sans Condensed','DejaVu Sans',sans-serif;font-stretch:condensed;">Параметри класификације</span>
<span class="t" style="left:628.7px;top:714.7px;letter-spacing:-0.02px;">Адитивне одлике компонената</span>
<span class="t" style="left:628.7px;top:786.5px;letter-spacing:0.19px;">Делимични прерачун за животну средину</span>
<span class="t" style="left:1899.1px;top:708.5px;letter-spacing:-0.25px;">Акутна токсичност удисањем</span>
<span class="t" style="left:1912.2px;top:781.5px;transform:scaleX(0.9477);">паре</span>
<span class="t" style="left:568.7px;top:896.8px;font-size:33px;letter-spacing:0.05px;font-weight:700;font-family:'DejaVu Sans Condensed','DejaVu Sans',sans-serif;font-stretch:condensed;">Резултат класификације</span>
<span class="t" style="left:568.7px;top:953.0px;transform:scaleX(0.9614);">Класификација</span>
<span class="t" style="left:717.4px;top:1054.0px;transform:scaleX(0.9310);">Asp. Tox. 1</span>
<span class="t" style="left:1277.1px;top:1054.0px;transform:scaleX(0.9307);">H304</span>
<span class="t" style="left:718.6px;top:1164.9px;transform:scaleX(0.8851);">Skin Sens. 1</span>
<span class="t" style="left:1277.1px;top:1164.9px;transform:scaleX(0.9307);">H317</span>
<span class="t" style="left:719.0px;top:1275.8px;transform:scaleX(0.9430);">Eye Irrit. 2</span>
<span class="t" style="left:1277.1px;top:1275.8px;transform:scaleX(0.9307);">H319</span>
<span class="t" style="left:718.4px;top:1386.7px;transform:scaleX(0.8666);">STOT RE 2</span>
<span class="t" style="left:1277.1px;top:1386.7px;letter-spacing:-0.40px;">H373 (slušni organi, bubrezi)</span>
<span class="t" style="left:718.0px;top:1497.6px;letter-spacing:-0.34px;">Aquatic Chronic 2</span>
<span class="t" style="left:1277.1px;top:1497.6px;transform:scaleX(0.9605);">H411</span>
<span class="t" style="left:568.7px;top:1599.2px;letter-spacing:0.18px;">Инструкције</span>
<span class="t" style="left:625.8px;top:1682.3px;transform:scaleX(0.8873);">P260</span>
<span class="t" style="left:782.9px;top:1682.3px;transform:scaleX(0.8801);">P280</span>
<span class="t" style="left:940.1px;top:1682.3px;transform:scaleX(0.9298);">P301+P310</span>
<span class="t" style="left:1201.5px;top:1682.3px;transform:scaleX(0.8742);">P314</span>
<span class="t" style="left:1358.5px;top:1682.3px;transform:scaleX(0.8694);">P331</span>
<span class="t" style="left:1515.6px;top:1682.3px;transform:scaleX(0.8730);">P391</span>
<span class="t" style="left:1898.6px;top:1599.2px;letter-spacing:-0.20px;">Додатне информације</span>
<span class="t" style="left:870.7px;top:1891.5px;font-size:33px;letter-spacing:0.08px;font-weight:700;font-family:'DejaVu Sans Condensed','DejaVu Sans',sans-serif;font-stretch:condensed;">Класификациони биланс стања</span>
<span class="t" style="left:2675.8px;top:1890.9px;transform:scaleX(0.8940);">OK</span>
<span class="t" style="left:3053.9px;top:1890.9px;letter-spacing:-0.34px;">Откажи</span>

</div>
</body></html>
